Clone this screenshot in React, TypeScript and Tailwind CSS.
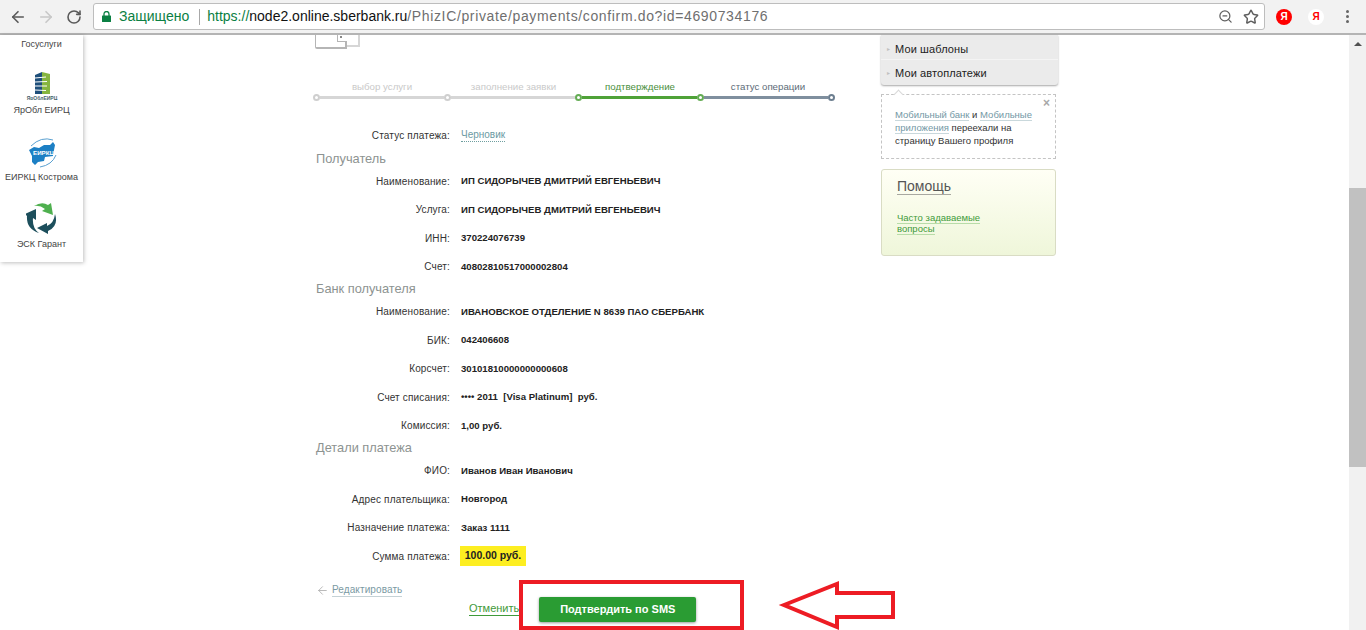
import { ArrowLeft, ArrowRight, RotateCw, ZoomOut, Star } from "lucide-react";

const font = "font-['Liberation_Sans',Arial,sans-serif]";

const Row = ({ label, value }: { label: string; value: string }) => (
  <div className="flex h-[28.5px] items-center">
    <div className="w-[134px] text-right text-[10px] tracking-[0.15px] text-[#333]">{label}</div>
    <div className="ml-[11px] text-[9.6px] font-bold text-[#222] whitespace-pre">{value}</div>
  </div>
);

const Heading = ({ children }: { children: string }) => (
  <div className="h-[16.5px] text-[12.8px] leading-[16px] text-[#8d9391]">{children}</div>
);

const Toolbar = () => (
  <div className="flex h-[35px] shrink-0 items-center border-b-2 border-[#b4b4b4] bg-[#f2f2f2]">
    <ArrowLeft className="ml-[9px] text-[#5a5a5a]" size={18} strokeWidth={2.2} />
    <ArrowRight className="ml-[10px] text-[#c8c8c8]" size={18} strokeWidth={2.2} />
    <RotateCw className="ml-[11px] text-[#5a5a5a]" size={16} strokeWidth={2.4} />
    <div className="ml-[11px] flex h-[27px] w-[1172px] items-center rounded-[3px] border border-[#bdbdbd] bg-white">
      <svg className="ml-[8px] shrink-0" width="9" height="11" viewBox="0 0 9 11">
        <rect x="0" y="4.5" width="9" height="6.5" rx="0.5" fill="#0b8043" />
        <path d="M2 5 V3 A2.5 2.5 0 0 1 7 3 V5" fill="none" stroke="#0b8043" strokeWidth="1.3" />
      </svg>
      <span className="ml-[8px] text-[14px] text-[#0b8043]">Защищено</span>
      <div className="ml-[10px] h-[16px] w-px bg-[#a8a8a8]" />
      <div className="ml-[7px] text-[14px] whitespace-nowrap">
        <span className="text-[#0b8043]">https://</span>
        <span className="text-[#111]">node2.online.sberbank.ru</span>
        <span className="tracking-[0.64px] text-[#6f6f6f]">/PhizIC/private/payments/confirm.do?id=4690734176</span>
      </div>
      <div className="ml-auto flex items-center">
        <ZoomOut className="text-[#5f5f5f]" size={15} strokeWidth={2} />
        <Star className="ml-[10px] mr-[5px] text-[#5f5f5f]" size={16} strokeWidth={2.2} />
      </div>
    </div>
    <div className="ml-[11px] flex h-[16px] w-[16px] items-center justify-center rounded-full bg-[#f00] text-[10px] font-bold text-white">Я</div>
    <div className="ml-[16px] flex h-[16px] w-[16px] items-center justify-center rounded-full bg-white text-[10px] font-bold text-[#f00]">Я</div>
    <div className="ml-[22px] flex flex-col gap-[2px]">
      <div className="h-[3px] w-[3px] rounded-full bg-[#666]" />
      <div className="h-[3px] w-[3px] rounded-full bg-[#666]" />
      <div className="h-[3px] w-[3px] rounded-full bg-[#666]" />
    </div>
  </div>
);

const Sidebar = () => (
  <div className="h-[227px] w-[83px] shrink-0 bg-white text-center text-[9px] text-[#444] shadow-[1px_1px_4px_rgba(0,0,0,0.25)]">
    <div className="pt-[3px] leading-[12px]">Госуслуги</div>
    <svg className="mx-auto mt-[21px] block" width="32" height="29" viewBox="0 0 32 29">
      <path d="M9 4 L16 1 V23 H9 Z" fill="#1f4f7a" />
      <path d="M16 1 L24 3 V23 H16 Z" fill="#86b53f" />
      <path d="M9 7 L20 6 M9 11 L21 10.5 M9 15 L21 15 M9 19 L20 19.5" stroke="#fff" strokeWidth="1" />
      <text x="16" y="28.5" textAnchor="middle" fontSize="5" fontWeight="700" fill="#46626b">ЯрОблЕИРЦ</text>
    </svg>
    <div className="mt-[4px] leading-[12px]">ЯрОбл ЕИРЦ</div>
    <svg className="mx-auto mt-[21px] block" width="34" height="32" viewBox="0 0 34 32">
      <path d="M4 13 L9 10 L14 11 L19 8 L25 8 L28 5 L30 8 L29 13 L28 19 L20 20 L19 24 L13 25 L10 28 L7 25 L7 19 Z" fill="#1c7fc4" />
      <path d="M6 9 Q16 -1 28 3 M31 18 Q27 28 15 30" stroke="#5aa0d0" strokeWidth="1" fill="none" />
      <text x="8" y="18" fontSize="6.2" fontWeight="700" fill="#fff">ЕИРКЦ</text>
    </svg>
    <div className="mt-[2px] leading-[12px] whitespace-nowrap">ЕИРКЦ Кострома</div>
    <svg className="mx-auto mt-[19px] block" width="32" height="32" viewBox="0 0 32 32">
      <path d="M8 4 Q16 -1 22 3 L25 1 L27 13 L16 9 L19 7 Q14 3 8 4 Z" fill="#4fb04f" />
      <path d="M29 12 Q33 24 22 29 L22 32 L11 26 L21 21 L21 24 Q28 21 29 12 Z" fill="#1d4f5c" />
      <path d="M13 31 Q0 27 1 14 L-1 12 L10 7 L10 18 L7 16 Q6 26 13 31 Z" fill="#1d4f5c" />
    </svg>
    <div className="mt-[4px] leading-[12px]">ЭСК Гарант</div>
  </div>
);

const Steps = () => (
  <div className="w-[520px]">
    <div className="flex h-[13px] text-[9.7px] leading-[13px]">
      <div className="w-[132px] text-center text-[#c9c9c9]">выбор услуги</div>
      <div className="w-[131px] text-center text-[#c9c9c9]">заполнение заявки</div>
      <div className="w-[122px] text-center text-[#4a8f3c]">подтверждение</div>
      <div className="w-[134px] text-center text-[#5c6b78]">статус операции</div>
    </div>
    <div className="-ml-[3px] flex h-[8px] items-center">
      <div className="h-[7px] w-[7px] shrink-0 rounded-full border-2 border-[#cfcfcf] bg-white" />
      <div className="h-[3px] w-[124px] bg-[#d6d6d6]" />
      <div className="h-[7px] w-[7px] shrink-0 rounded-full border-2 border-[#cfcfcf] bg-white" />
      <div className="h-[3px] w-[124px] bg-[#d6d6d6]" />
      <div className="h-[7px] w-[7px] shrink-0 rounded-full border-2 border-[#65ad55] bg-white" />
      <div className="h-[3px] w-[115px] bg-[#4fa238]" />
      <div className="h-[7px] w-[7px] shrink-0 rounded-full border-2 border-[#65ad55] bg-white" />
      <div className="h-[3px] w-[124px] bg-[#7f8f9e]" />
      <div className="h-[7px] w-[7px] shrink-0 rounded-full border-2 border-[#6d7f90] bg-white" />
    </div>
  </div>
);

const Main = () => (
  <div className="ml-[233px] w-[520px] shrink-0">
    <div className="relative flex h-[14px] -ml-[1px] items-start">
      <div className="h-[14px] w-[32px] rounded-bl-[2px] border-b-2 border-l border-r-2 border-[#b5b5b5] bg-white" />
      <div className="h-[12px] w-[13px] border-b-2 border-r-2 border-[#d6d6d6]" />
      <div className="absolute left-[22px] top-0 h-[7px] w-[10px] border-b border-l border-[#b5b5b5] bg-white">
        <div className="ml-[2px] mt-[1px] h-[2px] w-[2px] bg-[#888]" />
      </div>
    </div>
    <div className="mt-[31px]">
      <Steps />
    </div>
    <div className="mt-[24px] flex h-[20px] items-center">
      <div className="w-[134px] text-right text-[10px] tracking-[0.15px] text-[#333]">Статус платежа:</div>
      <div className="ml-[11px] border-b border-dotted border-[#6f9fa0] text-[10px] leading-[12px] text-[#6c9aa3]">Черновик</div>
    </div>
    <div className="mt-[5.5px]"><Heading>Получатель</Heading></div>
    <Row label="Наименование:" value="ИП СИДОРЫЧЕВ ДМИТРИЙ ЕВГЕНЬЕВИЧ" />
    <Row label="Услуга:" value="ИП СИДОРЫЧЕВ ДМИТРИЙ ЕВГЕНЬЕВИЧ" />
    <Row label="ИНН:" value="370224076739" />
    <Row label="Счет:" value="40802810517000002804" />
    <Heading>Банк получателя</Heading>
    <Row label="Наименование:" value="ИВАНОВСКОЕ ОТДЕЛЕНИЕ N 8639 ПАО СБЕРБАНК" />
    <Row label="БИК:" value="042406608" />
    <Row label="Корсчет:" value="30101810000000000608" />
    <Row label="Счет списания:" value="•••• 2011  [Visa Platinum]  руб." />
    <Row label="Комиссия:" value="1,00 руб." />
    <Heading>Детали платежа</Heading>
    <Row label="ФИО:" value="Иванов Иван Иванович" />
    <Row label="Адрес плательщика:" value="Новгород" />
    <Row label="Назначение платежа:" value="Заказ 1111" />
    <div className="flex h-[28.5px] items-center">
      <div className="w-[134px] text-right text-[10px] tracking-[0.15px] text-[#333]">Сумма платежа:</div>
      <div className="ml-[10px] flex h-[20px] w-[66px] items-center justify-center bg-[#fdee21] text-[10.5px] font-bold text-[#222]">100.00 руб.</div>
    </div>
    <div className="mt-[13px] flex h-[14px] items-center text-[10px] tracking-[0.1px] text-[#7b9aa3]">
      <ArrowLeft className="text-[#aaa]" size={13} strokeWidth={1.5} />
      <span className="ml-[3px] border-b border-[#c5d2d6] leading-[12px]">Редактировать</span>
    </div>
    <div className="-mt-[1.5px] flex h-[26px] items-center">
      <span className="ml-[153px] border-b border-[#3f9a3a] text-[11px] leading-[13px] text-[#3f9a3a]">Отменить</span>
      <button className="ml-[20px] h-[25px] w-[157px] rounded-[2px] bg-[#2a9c33] text-[11px] font-bold text-white shadow-[0_1px_3px_rgba(0,0,0,0.4)]">Подтвердить по SMS</button>
    </div>
  </div>
);

const Aside = () => (
  <div className="ml-[45px] w-[177px] shrink-0">
    <div className="rounded-b-[3px] bg-[#ebebeb] text-[11px] tracking-[0.1px] text-[#222] shadow-[0_1px_2px_rgba(0,0,0,0.35)]">
      <div className="flex h-[25px] items-center border-b border-[#f4f4f4] pt-[4px]">
        <span className="ml-[6px] text-[6px] text-[#c0c0c0]">▸</span><span className="ml-[5px]">Мои шаблоны</span>
      </div>
      <div className="flex h-[25px] items-center pt-[1px]">
        <span className="ml-[6px] text-[6px] text-[#c0c0c0]">▸</span><span className="ml-[5px]">Мои автоплатежи</span>
      </div>
    </div>
    <div className="relative mt-[9px] h-[65px] w-[175px] border border-dashed border-[#c4c4c4] px-[13px] pt-[13px] text-[9.5px] leading-[13px] text-[#333]">
      <div className="absolute left-[13px] -top-[4px] h-[7px] w-[7px] rotate-45 border-l border-t border-[#d8d8d8] bg-white" />
      <span className="absolute right-[5px] top-[2px] text-[12px] leading-[12px] font-bold text-[#a8a8a8]">×</span>
      <div><span className="border-b border-[#c9d8dc] text-[#7398a5]">Мобильный банк</span> и <span className="border-b border-[#c9d8dc] text-[#7398a5]">Мобильные</span></div>
      <div><span className="border-b border-[#c9d8dc] text-[#7398a5]">приложения</span> переехали на</div>
      <div>страницу Вашего профиля</div>
    </div>
    <div className="mt-[10px] h-[87px] w-[175px] rounded-[3px] border border-[#d9dcc4] bg-gradient-to-b from-[#fffff5] to-[#eff6da] pl-[15px] pt-[4px]">
      <span className="border-b border-[#a8a8a0] text-[14px] leading-[17px] text-[#555]">Помощь</span>
      <div className="mt-[14px] text-[9.5px] leading-[11px] text-[#3f9a3a]">
        <div><span className="border-b border-[#b8dca8]">Часто задаваемые</span></div>
        <div><span className="border-b border-[#b8dca8]">вопросы</span></div>
      </div>
    </div>
  </div>
);

const Scrollbar = () => (
  <div className="flex h-full w-[17px] shrink-0 flex-col bg-[#f1f1f1]">
    <div className="flex h-[17px] items-center justify-center">
      <div className="h-0 w-0 border-x-[4px] border-b-[4px] border-x-transparent border-b-[#505050]" />
    </div>
    <div className="mt-[136px] h-[279px] bg-[#c1c1c1]" />
  </div>
);

export default function App() {
  return (
    <div className={`relative flex h-[630px] w-[1366px] flex-col overflow-hidden bg-white ${font}`}>
      <Toolbar />
      <div className="flex min-h-0 flex-1">
        <Sidebar />
        <Main />
        <Aside />
        <div className="flex-1" />
        <Scrollbar />
      </div>
      {/* annotation drawn over the screenshot */}
      <div className="absolute left-[519px] top-[580px] h-[50px] w-[225px] border-4 border-[#ed1c24]" />
      <svg className="absolute left-[778px] top-[581px]" width="120" height="49" viewBox="0 0 120 49">
        <path d="M6 24 L59 3 V12 H115 V36 H59 V46 Z" fill="none" stroke="#ed1c24" strokeWidth="4" />
      </svg>
    </div>
  );
}
